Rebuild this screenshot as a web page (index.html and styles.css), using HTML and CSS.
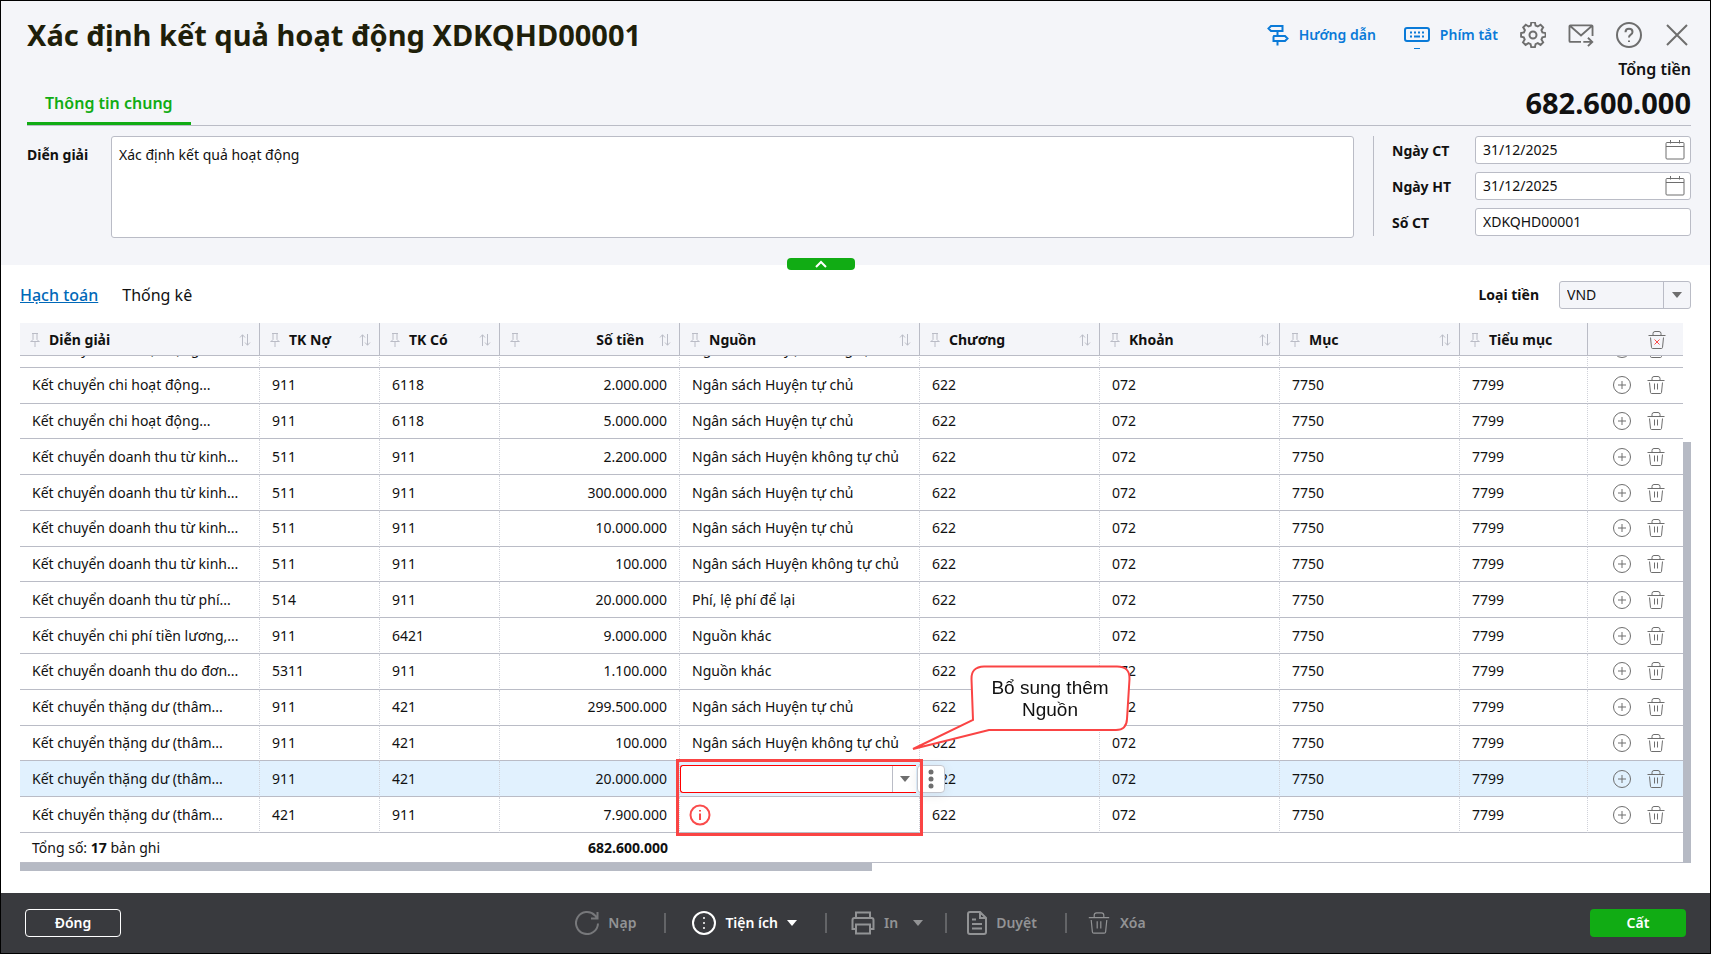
FILE: index.html
```html
<!DOCTYPE html>
<html lang="vi">
<head>
	<meta charset="UTF-8">
	<meta name="viewport" content="width=device-width, initial-scale=1">
	<title>Xác định kết quả hoạt động XDKQHD00001</title>
	<link rel="stylesheet" href="styles.css">
</head>
<body>
	<svg class="sprite" aria-hidden="true">
		<symbol id="i-pin" viewBox="0 0 10 14"><path d="M2 .5h6M3 .5v6L1 8.500M7 .5v6l2 2M.5 8.500h9M5 8.500V14"/></symbol>
		<symbol id="i-sort" viewBox="0 0 12 12"><path d="M3.500 12V.8M1 3.500 3.500.8 6 3.500M8.500 0v11.200M6 8.500l2.500 2.700L11 8.500"/></symbol>
		<symbol id="i-plus" viewBox="0 0 20 20"><circle cx="10" cy="10" r="8.500"/><path d="M10 6v8M6 10h8"/></symbol>
		<symbol id="i-trash" viewBox="0 0 20 20"><path d="M1.500 5.500h17M6 5.500V3.500Q6 1.500 8 1.500h4q2 0 2 2v2M3.500 7.500l1 10q.1 1 1.200 1h8.600q1.100 0 1.200-1l1-10M8.500 8.500v6M11.500 8.500v6"/></symbol>
		<symbol id="i-calendar" viewBox="0 0 20 20"><rect x="1" y="2.500" width="18" height="16.500" rx="1"/><path d="M1 6.500h18M5.500 0v3.500M14.500 0v3.500"/></symbol>
	</svg>

	<header class="head">
		<div class="title-row">
			<h1>Xác định kết quả hoạt động XDKQHD00001</h1>
			<nav class="tools">
				<a href="#" class="tool-link"><svg viewBox="0 0 22 22" width="22" height="22"><path d="M4 2h11.500v5H4L1.500 4.500zM7 12h11l2.500 2.500L18 17H6.500V13zM10.500 7v5M10.500 17v4.500"/></svg>Hướng dẫn</a>
				<a href="#" class="tool-link keys"><svg viewBox="0 0 26 28" width="26" height="28"><rect x="1" y="7" width="24" height="13" rx="2"/><path d="M6 11.500h2M10 11.500h2M14 11.500h2M18 11.500h2M6 15.500h2M10 15.500h6M18 15.500h2"/><path class="thin" d="M10 27.500h6"/></svg>Phím tắt</a>
				<button type="button" aria-label="Thiết lập"><svg viewBox="0 0 26 26" width="26" height="26"><path d="M11.100 1h3.800l.7 3.300 2.300 1 2.900-1.800 2.700 2.700-1.800 2.900 1 2.300 3.300.7v3.800l-3.300.7-1 2.300 1.800 2.900-2.700 2.700-2.900-1.800-2.300 1-.7 3.300h-3.800l-.7-3.300-2.300-1-2.900 1.800-2.700-2.700 1.800-2.900-1-2.300L0.500 15.900v-3.800l3-.7 1-2.300-1.800-2.900 2.700-2.700 2.900 1.800 2.300-1z" transform="translate(.6 -.6) scale(.96)"/><circle cx="13" cy="13" r="3.500"/></svg></button>
				<button type="button" aria-label="Gửi thư"><svg viewBox="0 0 28 26" width="26" height="24"><path d="M14 20.500H2.500q-1 0-1-1v-16q0-1 1-1h23q1 0 1 1V14M2 3l12 10.500L26 3M16.500 20.500h9.500M21.500 16l4.700 4.500-4.700 4.500"/></svg></button>
				<button type="button" aria-label="Trợ giúp"><svg viewBox="0 0 26 26" width="26" height="26"><circle cx="13" cy="13" r="12"/><path d="M9.500 10.200q0-3.400 3.500-3.400t3.500 3.200q0 1.700-2 2.900-1.500.9-1.500 2.700M13 18.500v1.500"/></svg></button>
				<button type="button" aria-label="Thoát"><svg viewBox="0 0 22 22" width="22" height="22"><path d="M1 1l20 20M21 1 1 21"/></svg></button>
			</nav>
		</div>
		<div class="tab-row">
			<a href="#" class="main-tab">Thông tin chung</a>
			<div class="total">
				<span class="total-label">Tổng tiền</span>
				<strong>682.600.000</strong>
			</div>
		</div>
		<form class="info">
			<label for="desc" class="desc-label">Diễn giải</label>
			<textarea id="desc">Xác định kết quả hoạt động</textarea>
			<div class="doc">
				<label for="ngayct">Ngày CT</label>
				<div class="date"><input id="ngayct" type="text" value="31/12/2025"><svg><use href="#i-calendar"/></svg></div>
				<label for="ngayht">Ngày HT</label>
				<div class="date"><input id="ngayht" type="text" value="31/12/2025"><svg><use href="#i-calendar"/></svg></div>
				<label for="soct">Số CT</label>
				<div class="date"><input id="soct" type="text" value="XDKQHD00001"></div>
			</div>
		</form>
		<button type="button" class="collapse" aria-label="Thu gọn"><svg viewBox="0 0 12 8" width="12" height="8"><path d="M1 7l5-5 5 5"/></svg></button>
	</header>

	<main>
		<div class="sub-row">
			<a href="#" class="sub-tab active">Hạch toán</a>
			<a href="#" class="sub-tab">Thống kê</a>
			<label for="currency">Loại tiền</label>
			<div class="combo currency">
				<select id="currency"><option>VND</option></select>
				<span class="caret"></span>
			</div>
		</div>

		<div class="grid">
			<div class="scroller" id="scroller">
				<table>
					<colgroup>
						<col class="w240"><col class="w120"><col class="w120"><col class="w180"><col class="w240">
						<col class="w180"><col class="w180"><col class="w180"><col class="w128"><col>
					</colgroup>
					<thead>
						<tr>
							<th><div class="th"><svg class="pin"><use href="#i-pin"/></svg><span>Diễn giải</span><svg class="sort"><use href="#i-sort"/></svg></div></th>
							<th><div class="th"><svg class="pin"><use href="#i-pin"/></svg><span>TK Nợ</span><svg class="sort"><use href="#i-sort"/></svg></div></th>
							<th><div class="th"><svg class="pin"><use href="#i-pin"/></svg><span>TK Có</span><svg class="sort"><use href="#i-sort"/></svg></div></th>
							<th><div class="th right"><svg class="pin"><use href="#i-pin"/></svg><span>Số tiền</span><svg class="sort"><use href="#i-sort"/></svg></div></th>
							<th><div class="th"><svg class="pin"><use href="#i-pin"/></svg><span>Nguồn</span><svg class="sort"><use href="#i-sort"/></svg></div></th>
							<th><div class="th"><svg class="pin"><use href="#i-pin"/></svg><span>Chương</span><svg class="sort"><use href="#i-sort"/></svg></div></th>
							<th><div class="th"><svg class="pin"><use href="#i-pin"/></svg><span>Khoản</span><svg class="sort"><use href="#i-sort"/></svg></div></th>
							<th><div class="th"><svg class="pin"><use href="#i-pin"/></svg><span>Mục</span><svg class="sort"><use href="#i-sort"/></svg></div></th>
							<th><div class="th"><svg class="pin"><use href="#i-pin"/></svg><span>Tiểu mục</span></div></th>
							<th><div class="acts"><button type="button" aria-label="Xóa tất cả"><svg viewBox="0 0 20 20"><path d="M1.500 5.500h17M6 5.500V3.500Q6 1.500 8 1.500h4q2 0 2 2v2M3.500 7.500l1 10q.1 1 1.200 1h8.600q1.100 0 1.200-1l1-10"/><path class="red" d="M7.500 9.500l5 5M12.500 9.500l-5 5"/></svg></button></div></th>
						</tr>
					</thead>
					<tbody id="rows"></tbody>
					<tfoot>
						<tr>
							<td colspan="3">Tổng số: <b>17</b> bản ghi</td>
							<td class="num"><b>682.600.000</b></td>
							<td colspan="6"></td>
						</tr>
					</tfoot>
				</table>
			</div>
			<div class="vbar"><div class="vthumb"></div></div>
		</div>
		<div class="hbar"><div class="hthumb"></div></div>
	</main>

	<footer class="bar">
		<button type="button" class="btn outline">Đóng</button>
		<div class="actions">
			<button type="button" class="off"><svg class="dim" viewBox="0 0 24 24"><path d="M23 12.500A11 11 0 1 1 20 4.500L22 7M22.500 1v6.500H16"/></svg>Nạp</button>
			<button type="button" class="on"><svg viewBox="0 0 24 24"><circle cx="12" cy="12" r="11"/><path class="dots" d="M12 7v.1M12 12v.1M12 17v.1"/></svg>Tiện ích<span class="caret"></span></button>
			<button type="button" class="off print"><svg viewBox="0 0 24 24"><path d="M5 7V1.500h14V7M5 18H1.500V9q0-2 2-2h17q2 0 2 2v9H19M5 13.500h14v9H5z"/></svg>In<span class="caret"></span></button>
			<button type="button" class="off approve"><svg viewBox="0 0 20 24"><path d="M3 1h10l6 6v14q0 2-2 2H3q-2 0-2-2V3q0-2 2-2zM13 1v6h6M5 8.500h4M5 13h10M5 17.500h10"/></svg>Duyệt</button>
			<button type="button" class="off remove"><svg><use href="#i-trash"/></svg>Xóa</button>
		</div>
		<button type="button" class="btn save">Cất</button>
	</footer>

	<script>
	var rows = [
		['Kết chuyển chi hoạt động...', '911', '6118', '3.000.000', 'Ngân sách Huyện không tự chủ'],
		['Kết chuyển chi hoạt động...', '911', '6118', '2.000.000', 'Ngân sách Huyện tự chủ'],
		['Kết chuyển chi hoạt động...', '911', '6118', '5.000.000', 'Ngân sách Huyện tự chủ'],
		['Kết chuyển doanh thu từ kinh...', '511', '911', '2.200.000', 'Ngân sách Huyện không tự chủ'],
		['Kết chuyển doanh thu từ kinh...', '511', '911', '300.000.000', 'Ngân sách Huyện tự chủ'],
		['Kết chuyển doanh thu từ kinh...', '511', '911', '10.000.000', 'Ngân sách Huyện tự chủ'],
		['Kết chuyển doanh thu từ kinh...', '511', '911', '100.000', 'Ngân sách Huyện không tự chủ'],
		['Kết chuyển doanh thu từ phí...', '514', '911', '20.000.000', 'Phí, lệ phí để lại'],
		['Kết chuyển chi phí tiền lương,...', '911', '6421', '9.000.000', 'Nguồn khác'],
		['Kết chuyển doanh thu do đơn...', '5311', '911', '1.100.000', 'Nguồn khác'],
		['Kết chuyển thặng dư (thâm...', '911', '421', '299.500.000', 'Ngân sách Huyện tự chủ'],
		['Kết chuyển thặng dư (thâm...', '911', '421', '100.000', 'Ngân sách Huyện không tự chủ'],
		['Kết chuyển thặng dư (thâm...', '911', '421', '20.000.000', 'edit'],
		['Kết chuyển thặng dư (thâm...', '421', '911', '7.900.000', 'error']
	];

	var editor = '<div class="combo source"><select aria-label="Nguồn"><option></option></select><span class="caret"></span></div>' +
		'<button type="button" class="more" aria-label="Thêm"><svg viewBox="0 0 6 20" width="6" height="20"><circle cx="3" cy="3" r="2.500"/><circle cx="3" cy="10" r="2.500"/><circle cx="3" cy="17" r="2.500"/></svg></button>' +
		'<div class="mark"></div>' +
		'<div class="note"><svg viewBox="0 0 220 86" width="220" height="86"><path d="M72 1.500H205Q218 1.500 217.500 14L215 54Q214.500 65 204 65H77L1 84 61 55 59.500 14Q59 2 72 1.500Z"/></svg><p>Bổ sung thêm<br>Nguồn</p></div>';
	var error = '<svg class="warn" viewBox="0 0 22 22" width="22" height="22"><circle cx="11" cy="11" r="9.500"/><path d="M11 9.500v6.500M11 6v1.500"/></svg>';
	var acts = '<div class="acts"><button type="button" aria-label="Thêm dòng"><svg><use href="#i-plus"/></svg></button>' +
		'<button type="button" aria-label="Xóa dòng"><svg><use href="#i-trash"/></svg></button></div>';

	document.getElementById("rows").innerHTML = rows.map(function(r) {
		var source = r[4] === 'edit' ? editor : r[4] === 'error' ? error : r[4];
		return '<tr' + (r[4] === 'edit' ? ' class="current"' : '') + '>' +
			'<td>' + r[0] + '</td><td>' + r[1] + '</td><td>' + r[2] + '</td>' +
			'<td class="num">' + r[3] + '</td><td class="src">' + source + '</td>' +
			'<td>622</td><td>072</td><td>7750</td><td>7799</td>' +
			'<td>' + acts + '</td></tr>';
	}).join('');

	// open on the last records
	var scroller = document.getElementById("scroller");
	scroller.scrollTop = scroller.scrollHeight;
	</script>
</body>
</html>
```
FILE: styles.css
```css
* {
	box-sizing: border-box;
}
body {
	margin: 0;
	height: 100vh;
	display: flex;
	flex-direction: column;
	border: 1px solid #000;
	background: #fff;
	color: #111;
	font-family: "Noto Sans", "Liberation Sans", sans-serif;
	font-size: 14px;
	line-height: 20px;
}
a {
	text-decoration: none;
}
button, input, select, textarea {
	font: inherit;
	color: inherit;
}
button {
	background: none;
	border: 0;
	padding: 0;
	cursor: pointer;
}
svg {
	display: block;
	flex: none;
	fill: none;
	stroke: #6e6e6e;
}
label {
	font-weight: 700;
}
.sprite {
	position: absolute;
	width: 0;
	height: 0;
}

/* header */
.head {
	position: relative;
	background: #f4f5f9;
	padding: 12px 19px 27px 26px;
}
.title-row {
	display: flex;
	justify-content: space-between;
	align-items: center;
	height: 44px;
}
h1 {
	margin: 0;
	font-size: 29px;
	line-height: 36px;
	color: #1f1f0a;
}
.tools {
	display: flex;
	align-items: center;
	gap: 22px;
	padding-right: 1px;
}
.tools button {
	display: flex;
	justify-content: center;
	width: 26px;
}
.tool-link {
	display: flex;
	align-items: center;
	gap: 10px;
	margin-right: 6px;
	color: #0a7ad8;
	font-weight: 600;
}
.keys {
	margin-right: 0;
}
.tools svg {
	stroke-width: 2;
}
.tool-link svg {
	stroke: #0a7ad8;
}
.tool-link .thin {
	stroke-width: 1;
}
.tab-row {
	display: flex;
	justify-content: space-between;
	align-items: flex-end;
	border-bottom: 1px solid #babcc6;
}
.main-tab {
	padding: 0 18px 7px;
	border-bottom: 3px solid #11ac14;
	color: #11ac14;
	font-size: 16px;
	font-weight: 600;
	line-height: 24px;
}
.total {
	display: flex;
	flex-direction: column;
	align-items: flex-end;
}
.total-label {
	font-size: 16px;
	font-weight: 600;
	line-height: 24px;
}
.total strong {
	font-size: 29px;
	line-height: 44px;
}
.info {
	display: flex;
	padding-top: 10px;
}
.desc-label {
	width: 84px;
	padding-top: 9px;
}
textarea {
	flex: 1;
	height: 102px;
	margin-right: 19px;
	padding: 8px 7px;
	border: 1px solid #babcc6;
	border-radius: 3px;
	resize: none;
	outline: 0;
}
.doc {
	display: grid;
	grid-template-columns: 83px 216px;
	grid-auto-rows: 28px;
	gap: 8px 0;
	align-self: flex-start;
	align-items: center;
	padding-left: 18px;
	border-left: 1px solid #babcc6;
}
.doc label {
	padding-top: 2px;
}
.date {
	display: flex;
	align-items: center;
	height: 28px;
	padding: 0 5px 0 7px;
	border: 1px solid #babcc6;
	border-radius: 3px;
	background: #fff;
}
.date input {
	flex: 1;
	min-width: 0;
	padding: 0;
	border: 0;
	outline: 0;
	background: none;
}
.date svg {
	width: 20px;
	height: 20px;
}
.collapse {
	position: absolute;
	left: 46%;
	bottom: -5px;
	width: 68px;
	height: 12px;
	border-radius: 4px;
	background: #11ac14;
}
.collapse svg {
	margin: 0 auto;
	stroke: #fff;
	stroke-width: 2;
}

/* detail grid */
main {
	flex: 1;
	min-height: 0;
	display: flex;
	flex-direction: column;
	padding: 0 19px 22px;
}
.sub-row {
	display: flex;
	align-items: center;
	height: 58px;
	padding-top: 1px;
}
.sub-tab {
	margin-right: 24px;
	color: #111;
	font-size: 16px;
	line-height: 24px;
}
.sub-tab.active {
	color: #0068b8;
	font-weight: 500;
	text-decoration: underline;
}
.sub-row label {
	margin-left: auto;
	margin-right: 20px;
}
.combo {
	display: flex;
	align-items: stretch;
	height: 28px;
	border: 1px solid #babcc6;
	border-radius: 3px;
}
.combo select {
	flex: 1;
	min-width: 0;
	padding: 0 7px;
	border: 0;
	outline: 0;
	background: none;
	appearance: none;
}
.combo .caret {
	width: 27px;
	border-left: 1px solid #babcc6;
}
.currency {
	width: 132px;
	background: #f4f5f9;
}
.caret {
	display: flex;
	align-items: center;
	justify-content: center;
	color: #6e6e6e;
}
.caret::before {
	content: "";
	border: 5px solid transparent;
	border-top: 6px solid currentColor;
	border-bottom: 0;
}
.grid {
	flex: 1;
	min-height: 0;
	display: flex;
}
.scroller {
	flex: 1;
	min-width: 0;
	overflow: hidden;
}
table {
	width: 100%;
	height: 564px;
	table-layout: fixed;
	border-collapse: separate;
	border-spacing: 0;
}
.w240 { width: 240px; }
.w180 { width: 180px; }
.w128 { width: 128px; }
.w120 { width: 120px; }
thead tr {
	height: 33px;
}
thead th {
	position: sticky;
	top: 0;
	z-index: 3;
	padding: 1px 0 0;
	background: #f4f5f9;
	border-bottom: 1px solid #babcc6;
	border-right: 1px solid #babcc6;
}
th:last-child, tbody td:last-child {
	border-right: 0;
}
.th {
	display: flex;
	align-items: center;
	gap: 9px;
	padding: 0 8px 0 10px;
}
.th span {
	flex: 1;
	text-align: left;
}
.th.right span {
	text-align: right;
}
.th.right {
	gap: 15px;
}
.pin {
	width: 10px;
	height: 14px;
	stroke: #babcc6;
}
.sort {
	width: 12px;
	height: 12px;
	stroke: #babcc6;
}
tbody td {
	padding: 0 12px;
	border-bottom: 1px solid #babcc6;
	border-right: 1px dotted #d0d2da;
	white-space: nowrap;
}
td.num {
	text-align: right;
}
.current td {
	background: #e1f1fe;
}
.src {
	position: relative;
}
.acts {
	display: flex;
	align-items: center;
	justify-content: flex-end;
	gap: 14px;
	height: 28px;
	padding-right: 5px;
}
th .acts {
	padding-right: 16px;
}
.acts svg {
	width: 20px;
	height: 20px;
}
.acts .red {
	stroke: #fa4b4b;
}
tfoot tr {
	height: 30px;
}
tfoot td {
	position: sticky;
	bottom: 0;
	z-index: 1;
	padding: 0 12px;
	background: #fff;
	border-bottom: 1px solid #babcc6;
}
.current .src {
	z-index: 2;
	padding: 0 3px 0 0;
}
.source {
	border-color: #f00;
	border-right: 0;
	border-radius: 3px 0 0 3px;
	background: #fff;
}
.source .caret {
	width: 24px;
}
.more {
	position: absolute;
	left: 237px;
	top: 4px;
	width: 28px;
	height: 28px;
	padding-left: 10px;
	border: 1px solid #c4c6ce;
	border-radius: 4px;
	background: #fff;
	box-shadow: 0 2px 12px rgba(0, 0, 0, .08);
}
.more svg {
	fill: #6e6e6e;
	stroke: none;
}
.warn {
	margin-left: -3px;
	stroke: #fa4b4b;
	stroke-width: 2;
}

/* callout over the missing field */
.mark {
	position: absolute;
	left: -4px;
	top: -2px;
	width: 247px;
	height: 77px;
	border: 3px solid #fa4444;
	pointer-events: none;
}
.note {
	position: absolute;
	left: 232px;
	top: -96px;
	width: 220px;
	height: 86px;
	pointer-events: none;
}
.note svg {
	fill: #fff;
	stroke: #fa4444;
	stroke-width: 2;
}
.note p {
	position: absolute;
	left: 60px;
	top: 12px;
	width: 156px;
	margin: 0;
	font-family: "Liberation Sans", Arial, sans-serif;
	font-size: 19px;
	line-height: 22px;
	text-align: center;
}
.vbar {
	width: 8px;
	display: flex;
	align-items: flex-end;
}
.vthumb {
	width: 100%;
	height: 78%;
	background: #b6bac4;
}
.hthumb {
	width: 51%;
	height: 8px;
	background: #b6bac4;
}

/* command bar */
.bar {
	display: flex;
	align-items: center;
	justify-content: space-between;
	height: 60px;
	padding: 0 24px;
	background: #393a3e;
}
.btn {
	width: 96px;
	height: 28px;
	border-radius: 4px;
	color: #fff;
	font-weight: 600;
}
.outline {
	border: 1px solid #fff;
}
.save {
	background: #11ac14;
}
.actions {
	display: flex;
	align-items: center;
	padding-left: 10px;
}
.actions button {
	display: flex;
	align-items: center;
	gap: 9px;
	padding: 0 28px;
	font-weight: 600;
}
.actions button + button {
	position: relative;
}
.actions button + button::before {
	content: "";
	position: absolute;
	left: 0;
	width: 2px;
	height: 20px;
	background: #636467;
}
.actions svg {
	width: 24px;
	height: 24px;
	stroke: currentColor;
	stroke-width: 2;
}
.actions .print {
	padding: 0 22px 0 26px;
}
.actions .print .caret {
	margin-left: 6px;
}
.actions .approve {
	padding-left: 22px;
}
.actions .approve svg {
	width: 20px;
}
.actions .remove {
	padding-left: 22px;
}
.actions .remove svg {
	stroke-width: 1;
}
.actions .on {
	color: #fff;
}
.actions .off {
	color: #929395;
}
.actions .dim {
	stroke: #77787b;
}
.actions .caret {
	color: inherit;
}
.actions .dots {
	stroke-linecap: round;
}
```
